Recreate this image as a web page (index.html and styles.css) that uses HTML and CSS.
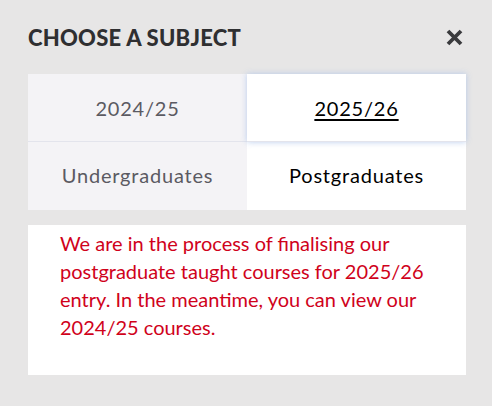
FILE: index.html
```
<!DOCTYPE html>
<html lang="en">
<head>
<meta charset="utf-8">
<link rel="stylesheet" href="styles.css">
</head>
<body>
<div class="panel">
  <div class="header">
    <h2 class="title">CHOOSE A SUBJECT</h2>
    <button class="close" aria-label="Close">
      <svg width="17" height="17" viewBox="0 0 17 17"><path d="M2 2 L15 15 M15 2 L2 15" stroke="#3a3a3d" stroke-width="3.8" stroke-linecap="butt"/></svg>
    </button>
  </div>
  <div class="tabs">
    <div class="row years">
      <div class="cell">2024/25</div>
      <div class="cell active"><span class="u">2025/26</span></div>
    </div>
    <div class="row levels">
      <div class="cell">Undergraduates</div>
      <div class="cell active">Postgraduates</div>
    </div>
  </div>
  <div class="message">
    <p>We are in the process of finalising our postgraduate taught courses for 2025/26 entry. In the meantime, you can view our 2024/25 courses.</p>
  </div>
</div>
</body>
</html>
```
FILE: styles.css
```
html, body {
  margin: 0;
  padding: 0;
  background: #e7e6e6;
}
body {
  font-family: Lato, "Liberation Sans", sans-serif;
}
.panel {
  padding: 22px 26px 0 28px;
}
.header {
  display: flex;
  justify-content: space-between;
  align-items: center;
  height: 30px;
  margin-bottom: 22px;
}
.title {
  margin: 0;
  font-size: 22px;
  font-weight: 900;
  color: #2f2f31;
  letter-spacing: 0.25px;
}
.close {
  border: 0;
  background: none;
  padding: 0;
  margin-right: 3px;
  width: 17px;
  height: 17px;
  display: flex;
}
.tabs {
  display: flex;
  flex-direction: column;
}
.row {
  display: grid;
  grid-template-columns: 1fr 1fr;
}
.cell {
  display: flex;
  align-items: center;
  justify-content: center;
  background: #f4f3f6;
  color: #5b5a62;
  font-size: 20px;
  letter-spacing: 0.8px;
}
.cell.active {
  background: #fff;
  color: #000;
}
.years .cell {
  height: 67px;
  border-bottom: 1px solid #e3e4ec;
}
.years .cell.active {
  box-shadow: 0 0 6px rgba(170, 195, 235, 0.8);
  position: relative;
  z-index: 1;
}
.levels .cell {
  height: 68px;
  padding-bottom: 2px;
  box-sizing: border-box;
}
.u {
  text-decoration: underline;
  text-decoration-thickness: 2px;
  text-underline-offset: 3px;
}
.message {
  margin-top: 15px;
  background: #fff;
  padding: 4px 32px 30px 32px;
  height: 116px;
}
.message p {
  margin: 0;
  color: #d0021b;
  font-size: 20px;
  line-height: 28px;
  letter-spacing: 0;
}
```
